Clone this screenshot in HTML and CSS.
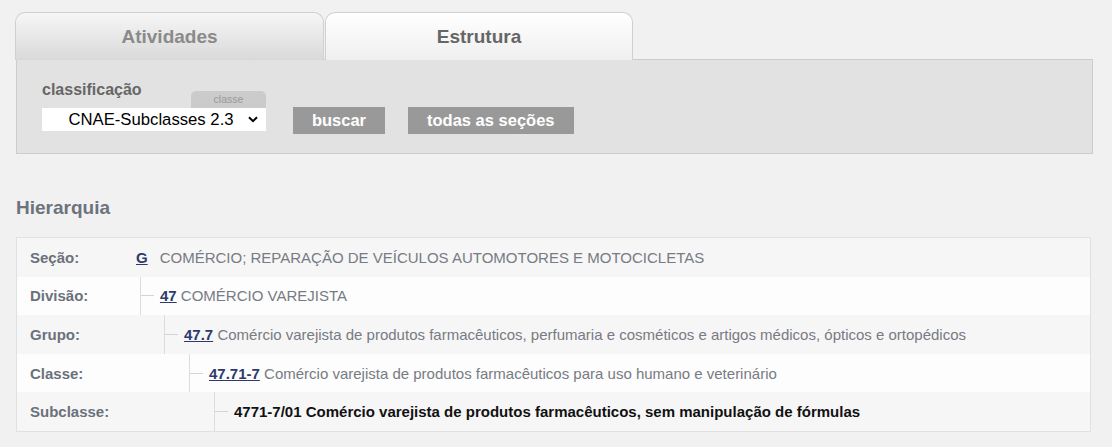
FILE: index.html
```html
<!DOCTYPE html>
<html lang="pt-BR">
<head>
<meta charset="utf-8">
<title>Estrutura CNAE</title>
<link rel="stylesheet" href="styles.css">
</head>
<body>
<div class="page">
  <div class="tabs">
    <div class="tab">Atividades</div>
    <div class="tab tab-active">Estrutura</div>
  </div>
  <div class="panel">
    <div class="field">
      <div class="field-top">
        <span class="field-label">classificação</span>
        <span class="field-tag">classe</span>
      </div>
      <select class="select">
        <option>CNAE-Subclasses 2.3</option>
      </select>
    </div>
    <button class="btn btn-first">buscar</button>
    <button class="btn">todas as seções</button>
  </div>

  <h2 class="heading">Hierarquia</h2>

  <div class="tree">
    <div class="row row-odd">
      <div class="label">Seção:</div>
      <div class="value value-root"><a class="code code-root" href="#">G</a> <span class="desc">COMÉRCIO; REPARAÇÃO DE VEÍCULOS AUTOMOTORES E MOTOCICLETAS</span></div>
    </div>
    <div class="row row-even">
      <div class="label">Divisão:</div>
      <div class="value"><div class="branch lv1"><a class="code" href="#">47</a>&nbsp;<span class="desc">COMÉRCIO VAREJISTA</span></div></div>
    </div>
    <div class="row row-odd">
      <div class="label">Grupo:</div>
      <div class="value"><div class="branch lv2"><a class="code" href="#">47.7</a>&nbsp;<span class="desc">Comércio varejista de produtos farmacêuticos, perfumaria e cosméticos e artigos médicos, ópticos e ortopédicos</span></div></div>
    </div>
    <div class="row row-even">
      <div class="label">Classe:</div>
      <div class="value"><div class="branch lv3"><a class="code" href="#">47.71-7</a>&nbsp;<span class="desc">Comércio varejista de produtos farmacêuticos para uso humano e veterinário</span></div></div>
    </div>
    <div class="row row-odd">
      <div class="label">Subclasse:</div>
      <div class="value"><div class="branch lv4"><span class="current">4771-7/01 Comércio varejista de produtos farmacêuticos, sem manipulação de fórmulas</span></div></div>
    </div>
  </div>
</div>
</body>
</html>
```

FILE: styles.css
```css
* { box-sizing: border-box; }

html, body {
  margin: 0;
  padding: 0;
  background: #f1f1f1;
  font-family: "Liberation Sans", Arial, sans-serif;
}

.page {
  padding: 12px 0 0 16px;
  width: 1093px;
}

/* Tabs */
.tabs {
  display: flex;
  gap: 1px;
  margin-left: -1px;
  position: relative;
  z-index: 1;
  margin-bottom: -1px;
}

.tab {
  width: 309px;
  height: 48px;
  border: 1px solid #d0d0d0;
  border-bottom: none;
  border-radius: 10px 10px 0 0;
  background: linear-gradient(#f6f6f6, #d9d9d9);
  color: #8a8a8a;
  font-size: 19px;
  font-weight: bold;
  display: flex;
  align-items: center;
  justify-content: center;
  padding-top: 0;
}

.tab-active {
  width: 308px;
  background: linear-gradient(#ffffff, #efefef);
  color: #666;
}

/* Search panel */
.panel {
  width: 1077px;
  height: 95px;
  background: #e2e2e2;
  border: 1px solid #cdcdcd;
  padding: 20px 0 0 25px;
  display: flex;
  align-items: flex-start;
}

.field {
  width: 224px;
  display: flex;
  flex-direction: column;
}

.field-top {
  height: 28px;
  display: flex;
  justify-content: space-between;
  align-items: flex-end;
}

.field-label {
  align-self: flex-start;
  font-size: 16px;
  font-weight: bold;
  color: #666;
  line-height: 18px;
  margin-top: 1px;
}

.field-tag {
  width: 75px;
  height: 17px;
  background: #cbcbcb;
  border-radius: 5px 5px 0 0;
  color: #999;
  font-size: 10.5px;
  line-height: 17px;
  text-align: center;
}

.select {
  appearance: none;
  -webkit-appearance: none;
  width: 224px;
  height: 23px;
  border: none;
  border-radius: 0;
  background: #fff url("data:image/svg+xml;utf8,<svg xmlns='http://www.w3.org/2000/svg' width='10' height='7' viewBox='0 0 10 7'><path d='M1 1.2 L5 5.2 L9 1.2' fill='none' stroke='black' stroke-width='2'/></svg>") no-repeat right 8px center;
  font-family: "Liberation Sans", Arial, sans-serif;
  font-size: 16.7px;
  color: #000;
  padding: 0 18px 0 12px;
  text-align: center;
  text-align-last: center;
  line-height: 23px;
}

.btn {
  margin-top: 27px;
  height: 27px;
  border: none;
  background: #999;
  color: #fff;
  font-family: "Liberation Sans", Arial, sans-serif;
  font-size: 16.5px;
  font-weight: bold;
  padding: 0 19px;
  margin-left: 23px;
  cursor: pointer;
}

.btn-first {
  margin-left: 27px;
  width: 92px;
  padding: 0;
}

/* Hierarchy */
.heading {
  margin: 43px 0 18px 0;
  font-size: 19px;
  line-height: 22px;
  font-weight: bold;
  color: #6d737d;
}

.tree {
  width: 1075px;
  border: 1px solid #e1e1e1;
  font-size: 15px;
}

.row {
  display: flex;
  height: 38.6px;
  align-items: stretch;
}

.row-odd { background: #f6f6f6; }
.row-even { background: #fdfdfd; }

.label {
  width: 113px;
  flex: none;
  padding-left: 13px;
  display: flex;
  align-items: center;
  font-weight: bold;
  color: #6b717b;
}

.value {
  flex: 1;
  display: flex;
  align-items: stretch;
  white-space: nowrap;
}

.value-root {
  align-items: center;
  padding-left: 6px;
}

.code {
  color: #2d3a6b;
  font-weight: bold;
  text-decoration: underline;
}

.code-root {
  margin-right: 12px;
}

.desc {
  color: #777b83;
}

.current {
  color: #111;
  font-weight: bold;
}

.branch {
  display: flex;
  align-items: center;
  border-left: 1px solid #dcdcdc;
}

.branch::before {
  content: "";
  width: 13px;
  height: 1px;
  background: #d4d4d4;
  margin-right: 6px;
  flex: none;
}

.lv1 { margin-left: 10px; }
.lv2 { margin-left: 34px; }
.lv3 { margin-left: 59px; }
.lv4 { margin-left: 84px; }
```
